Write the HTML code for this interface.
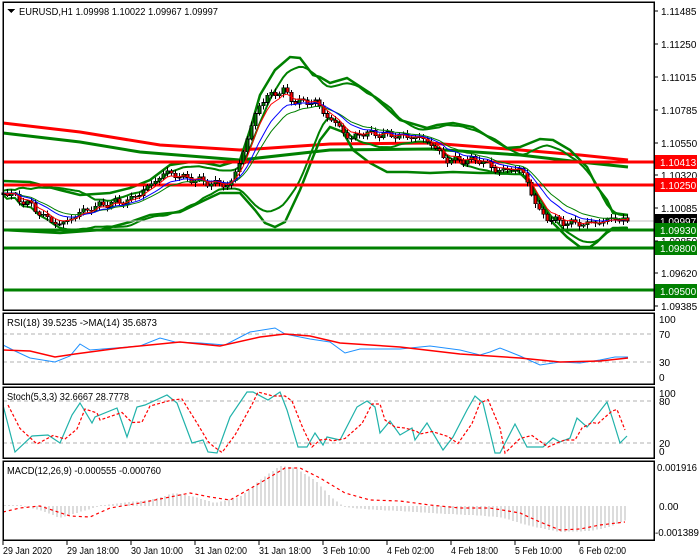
<!DOCTYPE html>
<html><head><meta charset="utf-8"><style>
body{margin:0;background:#fff;width:700px;height:560px;overflow:hidden;font-family:"Liberation Sans",Tahoma,sans-serif}
svg{position:absolute;left:0;top:0}
.t{font-size:10px;fill:#000;font-family:"Liberation Sans",sans-serif}
.w{font-size:10px;fill:#fff;font-family:"Liberation Sans",sans-serif}
</style></head><body>
<svg id="s" width="700" height="560" xmlns="http://www.w3.org/2000/svg" shape-rendering="crispEdges">
<rect width="700" height="560" fill="#fff"/>
<g id="g"></g>
<g fill="none" stroke="#000" stroke-width="1.5">
<rect x="3" y="2" width="651" height="308"/>
<rect x="3" y="313" width="651" height="71"/>
<rect x="3" y="387" width="651" height="71"/>
<rect x="3" y="461" width="651" height="79"/>
</g>
<polygon points="7,9 15,9 11,13" fill="#000"/>
<text x="19" y="15" class="t" textLength="199" lengthAdjust="spacingAndGlyphs">EURUSD,H1  1.09998 1.10022 1.09967 1.09997</text>
<text x="7" y="326" class="t" textLength="150" lengthAdjust="spacingAndGlyphs">RSI(18) 39.5235  -&gt;MA(14) 35.6873</text>
<text x="7" y="400" class="t" textLength="122" lengthAdjust="spacingAndGlyphs">Stoch(5,3,3) 32.6667 28.7778</text>
<text x="7" y="474" class="t" textLength="154" lengthAdjust="spacingAndGlyphs">MACD(12,26,9) -0.000555 -0.000760</text>
<text x="661" y="15" class="t">1.11485</text>
<text x="661" y="48" class="t">1.11250</text>
<text x="661" y="81" class="t">1.11015</text>
<text x="661" y="114" class="t">1.10785</text>
<text x="661" y="147" class="t">1.10550</text>
<text x="661" y="179" class="t">1.10320</text>
<text x="661" y="212" class="t">1.10085</text>
<text x="661" y="245" class="t">1.09850</text>
<text x="661" y="277" class="t">1.09620</text>
<text x="661" y="310" class="t">1.09385</text>
<rect x="655" y="155" width="42" height="14" fill="#f00"/><text x="660" y="166" class="w">1.10413</text>
<rect x="655" y="178" width="42" height="14" fill="#f00"/><text x="660" y="189" class="w">1.10250</text>
<rect x="655" y="214" width="42" height="14" fill="#000"/><text x="660" y="225" class="w">1.09997</text>
<rect x="655" y="223" width="42" height="14" fill="#008000"/><text x="660" y="234" class="w">1.09930</text>
<rect x="655" y="241" width="42" height="14" fill="#008000"/><text x="660" y="252" class="w">1.09800</text>
<rect x="655" y="284" width="42" height="14" fill="#008000"/><text x="660" y="295" class="w">1.09500</text>
<text x="659" y="323" class="t">100</text>
<text x="659" y="338" class="t">70</text>
<text x="659" y="366" class="t">30</text>
<text x="659" y="381" class="t">0</text>
<text x="659" y="397" class="t">100</text>
<text x="659" y="405" class="t">80</text>
<text x="659" y="447" class="t">20</text>
<text x="659" y="455" class="t">0</text>
<text x="657" y="471" class="t" textLength="40" lengthAdjust="spacingAndGlyphs">0.001916</text>
<text x="659" y="510" class="t">0.00</text>
<text x="655" y="536" class="t" textLength="44" lengthAdjust="spacingAndGlyphs">-0.001389</text>
<g stroke="#000">
<line x1="654" y1="11" x2="658" y2="11"/><line x1="654" y1="44" x2="658" y2="44"/><line x1="654" y1="77" x2="658" y2="77"/><line x1="654" y1="110" x2="658" y2="110"/><line x1="654" y1="143" x2="658" y2="143"/><line x1="654" y1="175" x2="658" y2="175"/><line x1="654" y1="208" x2="658" y2="208"/><line x1="654" y1="241" x2="658" y2="241"/><line x1="654" y1="273" x2="658" y2="273"/><line x1="654" y1="306" x2="658" y2="306"/>
<line x1="3" y1="540" x2="3" y2="545"/><line x1="67" y1="540" x2="67" y2="545"/><line x1="131" y1="540" x2="131" y2="545"/><line x1="195" y1="540" x2="195" y2="545"/><line x1="259" y1="540" x2="259" y2="545"/><line x1="323" y1="540" x2="323" y2="545"/><line x1="387" y1="540" x2="387" y2="545"/><line x1="451" y1="540" x2="451" y2="545"/><line x1="515" y1="540" x2="515" y2="545"/><line x1="579" y1="540" x2="579" y2="545"/>
</g>
<text x="3" y="554" class="t" textLength="49" lengthAdjust="spacingAndGlyphs">29 Jan 2020</text>
<text x="67" y="554" class="t" textLength="52" lengthAdjust="spacingAndGlyphs">29 Jan 18:00</text>
<text x="131" y="554" class="t" textLength="52" lengthAdjust="spacingAndGlyphs">30 Jan 10:00</text>
<text x="195" y="554" class="t" textLength="52" lengthAdjust="spacingAndGlyphs">31 Jan 02:00</text>
<text x="259" y="554" class="t" textLength="52" lengthAdjust="spacingAndGlyphs">31 Jan 18:00</text>
<text x="323" y="554" class="t" textLength="47" lengthAdjust="spacingAndGlyphs">3 Feb 10:00</text>
<text x="387" y="554" class="t" textLength="47" lengthAdjust="spacingAndGlyphs">4 Feb 02:00</text>
<text x="451" y="554" class="t" textLength="47" lengthAdjust="spacingAndGlyphs">4 Feb 18:00</text>
<text x="515" y="554" class="t" textLength="47" lengthAdjust="spacingAndGlyphs">5 Feb 10:00</text>
<text x="579" y="554" class="t" textLength="47" lengthAdjust="spacingAndGlyphs">6 Feb 02:00</text>
</svg>
<script>
var g=document.getElementById('g'),h='';
function interp(K,x){for(var i=0;i<K.length-1;i++){if(x<=K[i+1][0]){var a=K[i],b=K[i+1],t=(x-a[0])/(b[0]-a[0]||1);return a[1]+(b[1]-a[1])*t;}}return K[K.length-1][1];}
function pl(P,c,w,d){return '<polyline fill="none" stroke="'+c+'" stroke-width="'+w+'" '+(d?'stroke-dasharray="'+d+'" ':'')+'points="'+P.map(function(p){return p[0].toFixed(1)+','+p[1].toFixed(1)}).join(' ')+'" shape-rendering="auto"/>';}
function line(y,c,w){return '<line x1="3" x2="654" y1="'+y+'" y2="'+y+'" stroke="'+c+'" stroke-width="'+w+'"/>';}
[334,362,401,443].forEach(function(y){h+='<line x1="3" x2="654" y1="'+y+'" y2="'+y+'" stroke="#b0b0b0" stroke-dasharray="4,3"/>';});
var PK=[[5,192],[30,205],[45,218],[60,225],[80,212],[100,205],[130,200],[150,185],[165,172],[185,178],[210,183],[230,185],[240,160],[250,130],[258,105],[270,95],[282,90],[295,102],[315,102],[325,115],[340,128],[350,140],[360,133],[390,135],[420,138],[430,143],[445,160],[460,160],[480,160],[495,170],[510,170],[520,168],[530,190],[540,215],[560,222],[580,224],[600,222],[615,218],[628,221]];
var C=[],X=[];for(var x=3;x<=628;x+=4){X.push(x);C.push(interp(PK,x)+2.5*Math.sin(x*0.37)+1.5*Math.sin(x*1.13));}
C[C.length-1]=221;
function sma(a,n){return a.map(function(v,i){var s=0,k=0;for(var j=Math.max(0,i-n+1);j<=i;j++){s+=a[j];k++;}return s/k;});}
function ema(a,n){var r=[],k=2/(n+1);a.forEach(function(v,i){r.push(i?r[i-1]+k*(v-r[i-1]):v)});return r;}
function sd(a,n){var m=sma(a,n);return a.map(function(v,i){var s=0,k=0;for(var j=Math.max(0,i-n+1);j<=i;j++){s+=(a[j]-m[i])*(a[j]-m[i]);k++;}return Math.sqrt(s/k);});}
var m20=sma(C,20),s20=sd(C,20);
function P(a){return a.map(function(v,i){return [X[i],v]});}
h+=pl([[3,123],[80,132],[160,145],[240,150],[330,144],[430,143],[520,150],[580,155],[628,160]],'#f00',3);
h+=pl([[3,133],[80,142],[140,152],[240,160],[330,150],[430,149],[520,155],[580,162],[628,167]],'#008000',3);
h+=pl([[3,181],[30,182],[60,190],[80,195],[110,193],[130,188],[150,180],[170,165],[190,162],[205,163],[220,166],[240,160],[250,130],[260,95],[275,70],[290,57],[300,58],[313,75],[320,77],[330,83],[347,78],[370,93],[400,120],[427,128],[437,125],[453,123],[473,127],[490,138],[507,148],[520,147],[540,139],[553,140],[570,150],[587,167],[597,187],[607,200],[613,213],[628,215]],'#008000',2.5);
h+=pl([[3,230],[60,233],[100,230],[130,222],[150,215],[180,212],[205,200],[220,193],[240,193],[255,210],[265,223],[275,227],[285,222],[300,190],[313,157],[320,140],[330,127],[343,132],[353,150],[370,163],[387,172],[407,172],[430,173],[453,172],[480,173],[503,173],[517,170],[527,180],[540,203],[553,223],[567,237],[580,247],[590,247],[597,242],[607,232],[613,228],[628,228]],'#008000',2.5);
h+=pl(P(m20.map(function(v,i){return v-1.6*s20[i]-2})),'#008000',2);
h+=pl(P(m20.map(function(v,i){return v+1.6*s20[i]+2})),'#008000',2);
h+=line(221,'#c0c0c0',1);
h+=line(162,'#f00',3);h+=line(185,'#f00',3);
h+=line(230,'#008000',3);h+=line(248,'#008000',3);h+=line(290,'#008000',3);
for(var i=0;i<C.length;i++){var o=i?C[i-1]:C[0]+2,c=C[i],x=X[i];var hi=Math.min(o,c)-1-3*Math.abs(Math.sin(i*2.1)),lo=Math.max(o,c)+1+3*Math.abs(Math.cos(i*1.7));
h+='<line x1="'+(x+0.5)+'" x2="'+(x+0.5)+'" y1="'+hi+'" y2="'+lo+'" stroke="#000"/>';
var t=Math.min(o,c),bh=Math.max(1,Math.abs(o-c));h+='<rect x="'+(x-1)+'" y="'+t+'" width="3" height="'+bh+'" fill="'+(c<o?'#008000':'#f00')+'" stroke="#000" stroke-width="0.6"/>';}
h+=pl(P(ema(C,14)),'#008000',1);
h+=pl(P(ema(C,10)),'#00f',1);
h+=pl(P(ema(C,5)),'#f00',1);
h+=pl([[3,345],[15,351],[30,358],[55,362],[70,356],[80,344],[90,350],[140,346],[160,338],[175,342],[200,343],[225,345],[250,332],[275,328],[285,334],[310,339],[330,342],[345,353],[360,349],[400,349],[430,346],[460,350],[480,355],[490,352],[500,348],[520,356],[540,365],[560,362],[580,363],[600,360],[615,357],[628,357]],'#1e90ff',1);
h+=pl([[3,350],[30,351],[55,357],[75,354],[120,348],[180,342],[220,346],[260,337],[285,334],[310,336],[340,343],[400,347],[460,354],[520,358],[560,362],[600,361],[628,358]],'#f00',1.5);
var SK=[[3,405],[15,452],[32,436],[48,435],[60,443],[72,415],[80,403],[92,423],[95,417],[117,408],[127,437],[137,407],[145,405],[167,395],[177,403],[192,443],[203,440],[208,452],[217,453],[230,417],[247,392],[253,392],[268,400],[280,392],[287,410],[298,447],[307,447],[315,433],[323,445],[327,437],[340,440],[357,407],[367,401],[375,407],[380,433],[390,421],[400,435],[412,428],[415,440],[427,423],[443,450],[453,437],[467,410],[475,396],[483,403],[495,453],[500,453],[515,424],[527,447],[543,447],[553,438],[560,442],[570,438],[577,418],[587,427],[593,420],[607,402],[612,417],[620,443],[627,436]];
h+=pl(SK,'#20b2aa',1.2);
h+=pl(SK.map(function(p,i){return [p[0]+5,i?(p[1]+SK[i-1][1])/2:p[1]]}).filter(function(p){return p[0]<=628}),'#f00',1.2,'3,2');
var HK=[[3,506],[20,505],[40,510],[60,518],[80,512],[100,506],[120,503],[150,500],[175,493],[195,497],[215,503],[240,497],[260,480],[280,466],[295,468],[315,480],[330,496],[340,504],[350,508],[380,510],[400,511],[430,513],[470,515],[500,517],[530,526],[560,532],[590,531],[610,527],[628,519]];
for(var x=5;x<=628;x+=4){var y=interp(HK,x);if(Math.abs(y-506)<1)y=y<506?505:507;h+='<line x1="'+x+'" x2="'+x+'" y1="506" y2="'+y+'" stroke="#b8b8b8"/>';}
h+=pl([[3,512],[20,508],[40,506],[70,516],[90,517],[110,508],[140,503],[170,497],[190,493],[210,497],[230,500],[260,483],[285,468],[300,468],[320,478],[345,493],[370,500],[400,501],[430,505],[460,508],[490,508],[520,513],[540,522],[560,530],[580,529],[600,525],[625,522]],'#f00',1.2,'3,3');
g.innerHTML=h;
</script>
</body></html>
